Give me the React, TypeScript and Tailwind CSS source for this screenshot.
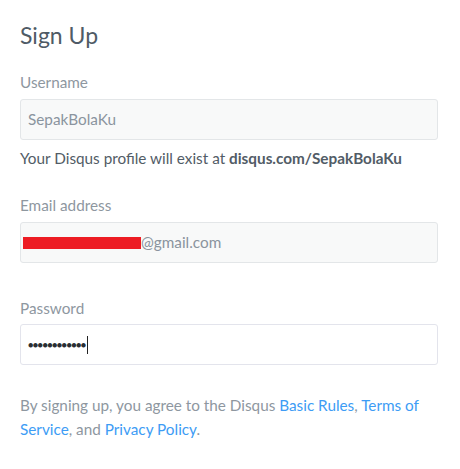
export default function App() {
  const font = { fontFamily: '"Lato", "Open Sans", sans-serif' };
  return (
    <div className="w-[460px] h-[469px] bg-white px-[20px] pt-[20px]" style={font}>
      <div className="w-[418px] flex flex-col">
        <h1 className="text-[23px] leading-[30px] text-[#4f5b66] font-normal">Sign Up</h1>

        <div className="mt-[22px] text-[15.3px] leading-[20px] text-[#8e979f]">Username</div>
        <div className="mt-[7px] h-[41px] rounded-[3px] border border-[#e3e6e8] bg-[#f8f9f9] px-[7px] flex items-center text-[15.3px] text-[#8a949e]">
          SepakBolaKu
        </div>
        <div className="mt-[8px] text-[15.3px] leading-[20px] text-[#525c66]">
          Your Disqus profile will exist at <span className="font-bold">disqus.com/SepakBolaKu</span>
        </div>

        <div className="mt-[27px] text-[15.3px] leading-[20px] text-[#8e979f]">Email address</div>
        <div className="mt-[7px] h-[41px] rounded-[3px] border border-[#e3e6e8] bg-[#f8f9f9] pl-[2px] flex items-center text-[15.3px] text-[#8a949e]">
          <span className="inline-block w-[118px] h-[12px] bg-[#ed1c24]" />
          <span>@gmail.com</span>
        </div>

        <div className="mt-[35px] text-[15.3px] leading-[20px] text-[#8e979f]">Password</div>
        <div className="mt-[6px] h-[41px] rounded-[3px] border border-[#e3e4ec] bg-white px-[7px] flex items-center">
          <span className="text-[9px] tracking-[-0.6px] text-[#2a2e33] leading-none">●●●●●●●●●●●●</span>
          <span className="ml-[1px] w-[1px] h-[18px] bg-[#222]" />
        </div>

        <p className="mt-[28px] text-[15.3px] leading-[24px] text-[#8e979f]">
          By signing up, you agree to the Disqus <span className="text-[#3d9cf5]">Basic Rules</span>, <span className="text-[#3d9cf5]">Terms of Service</span>, and <span className="text-[#3d9cf5]">Privacy Policy</span>.
        </p>
      </div>
    </div>
  );
}
